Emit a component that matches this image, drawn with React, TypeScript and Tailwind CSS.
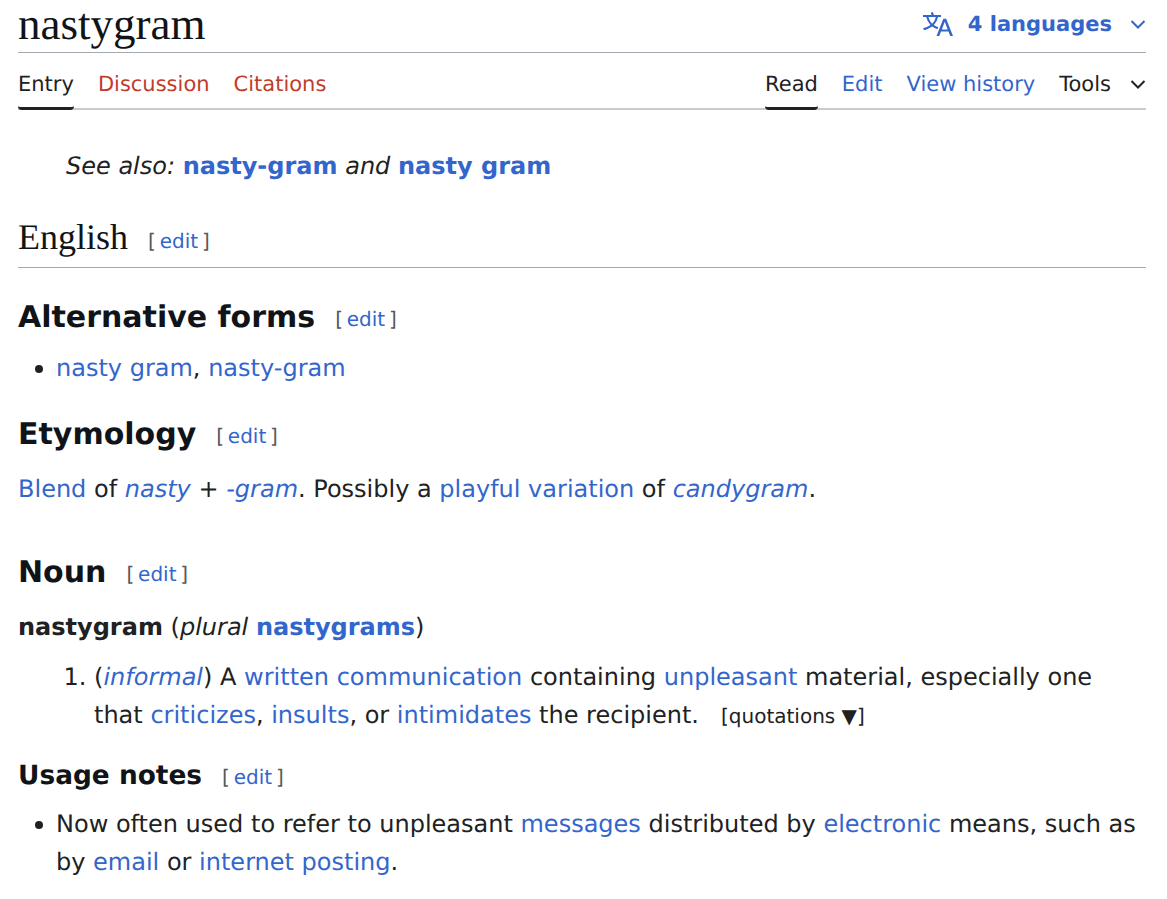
function Edit({ flat }: { flat?: boolean }) {
  return (
    <span className={flat ? "ml-5 text-[20px] leading-none font-normal text-[#54595d] [word-spacing:-2.5px] [font-family:'DejaVu_Sans',sans-serif]" : "ml-5 align-[1px] text-[20px] leading-none font-normal text-[#54595d] [word-spacing:-2.5px] [font-family:'DejaVu_Sans',sans-serif]"}>
      [ <a className="text-[#3366cc]">edit</a> ]
    </span>
  );
}

function L({ children }: { children: React.ReactNode }) {
  return <a className="text-[#3366cc]">{children}</a>;
}

function Chevron({ color }: { color: string }) {
  return (
    <svg width="16" height="16" viewBox="0 0 16 16" fill="none" stroke={color} strokeWidth="2">
      <path d="M1.5 5 8 11.5 14.5 5" />
    </svg>
  );
}

function Bullet({ children }: { children: React.ReactNode }) {
  return (
    <li className="relative before:absolute before:left-[-21px] before:top-[16px] before:size-2 before:rounded-full before:bg-[#202122] before:content-['']">
      {children}
    </li>
  );
}

export default function App() {
  return (
    <div className="pl-[18px] pr-[21px] text-[24px] leading-[38px] text-[#202122] [text-rendering:geometricPrecision] [font-family:'DejaVu_Sans',sans-serif] bg-white h-[899px] overflow-hidden">
      {/* title */}
      <div className="flex justify-between items-center h-[53px] border-b border-[#a2a9b1]">
        <h1 className="pb-[4px] text-[45px] leading-[44px] text-[#101418] [font-family:'Liberation_Serif',serif]">nastygram</h1>
        <div className="flex items-center pb-[4px] text-[#3366cc] font-bold text-[21px]">
          <svg width="30" height="30" viewBox="0 0 20 20" fill="#3366cc">
            <path d="M20 18h-1.44a.6.6 0 0 1-.4-.12.8.8 0 0 1-.23-.31L17 15h-5l-1 2.54a.8.8 0 0 1-.22.3.6.6 0 0 1-.4.14H9l4.55-11.47h1.89zm-3.53-4.31L14.89 9.5a12 12 0 0 1-.39-1.24q-.09.37-.19.69l-.19.56-1.58 4.19zm-6.3-1.58a13.4 13.4 0 0 1-2.91-1.41 11.46 11.46 0 0 0 2.81-5.37H12V4H7.31a4 4 0 0 0-.2-.56C6.87 2.79 6.6 2 6.6 2l-1.47.5s.4.89.6 1.5H0v1.33h2.15A11.23 11.23 0 0 0 5 10.7a17.2 17.2 0 0 1-5 2.1q.56.82.87 1.38a23.3 23.3 0 0 0 5.22-2.51 15.6 15.6 0 0 0 3.56 1.77zM3.63 5.33h4.91a8.1 8.1 0 0 1-2.45 4.45 9.1 9.1 0 0 1-2.46-4.45" />
          </svg>
          <span className="ml-[15px]">4 languages</span>
          <span className="ml-[18px]"><Chevron color="#3366cc" /></span>
        </div>
      </div>

      {/* tabs */}
      <div className="flex justify-between h-[57px] border-b-2 border-[#c8ccd1] text-[21px]">
        <div className="flex gap-6">
          <div className="h-[57px] pt-[12px] border-b-[3px] border-[#202122] rounded-b-sm">Entry</div>
          <div className="pt-[12px] text-[#bf3c2c]">Discussion</div>
          <div className="pt-[12px] text-[#bf3c2c]">Citations</div>
        </div>
        <div className="flex gap-6">
          <div className="h-[57px] pt-[12px] border-b-[3px] border-[#202122] rounded-b-sm">Read</div>
          <div className="pt-[12px] text-[#3366cc]">Edit</div>
          <div className="pt-[12px] text-[#3366cc]">View history</div>
          <div className="pt-[12px] flex items-start">
            Tools
            <span className="ml-[19px] mt-[11px]"><Chevron color="#202122" /></span>
          </div>
        </div>
      </div>

      <p className="mt-[37px] ml-12 italic">
        See also: <a className="font-bold not-italic text-[#3366cc]">nasty-gram</a> and{" "}
        <a className="font-bold not-italic text-[#3366cc]">nasty gram</a>
      </p>

      <h2 className="mt-[28px] h-[55px] border-b border-[#a2a9b1] text-[36px] leading-[48px] text-[#101418] [font-family:'Liberation_Serif',serif]">
        English<Edit />
      </h2>

      <h3 className="mt-[29px] font-bold text-[30px] leading-[42px] text-[#101418]">
        Alternative forms<Edit />
      </h3>
      <ul className="mt-[10px] ml-[38px]">
        <Bullet><L>nasty gram</L>, <L>nasty-gram</L></Bullet>
      </ul>

      <h3 className="mt-[27px] font-bold text-[30px] leading-[42px] text-[#101418]">
        Etymology<Edit />
      </h3>
      <p className="mt-[14px]">
        <L>Blend</L> of <L><i>nasty</i></L> + <L><i>-gram</i></L>. Possibly a <L>playful variation</L> of <L><i>candygram</i></L>.
      </p>

      <h3 className="mt-[44px] font-bold text-[30px] leading-[42px] text-[#101418]">
        Noun<Edit />
      </h3>
      <p className="mt-[14px]">
        <b>nastygram</b> (<i>plural</i> <a className="font-bold text-[#3366cc]">nastygrams</a>)
      </p>
      <ol className="mt-[12px] ml-[76px] list-decimal">
        <li>
          (<L><i>informal</i></L>) A <L>written communication</L> containing <L>unpleasant</L> material, especially one that{" "}
          <L>criticizes</L>, <L>insults</L>, or <L>intimidates</L> the recipient.
          <span className="ml-[22px] text-[20px]">[quotations ▼]</span>
        </li>
      </ol>

      <h4 className="mt-[20px] font-bold text-[26.4px] leading-[42px] text-[#101418]">
        Usage notes<Edit flat />
      </h4>
      <ul className="mt-[8px] ml-[38px]">
        <Bullet>
          Now often used to refer to unpleasant <L>messages</L> distributed by <L>electronic</L> means, such as by{" "}
          <L>email</L> or <L>internet posting</L>.
        </Bullet>
      </ul>
    </div>
  );
}
